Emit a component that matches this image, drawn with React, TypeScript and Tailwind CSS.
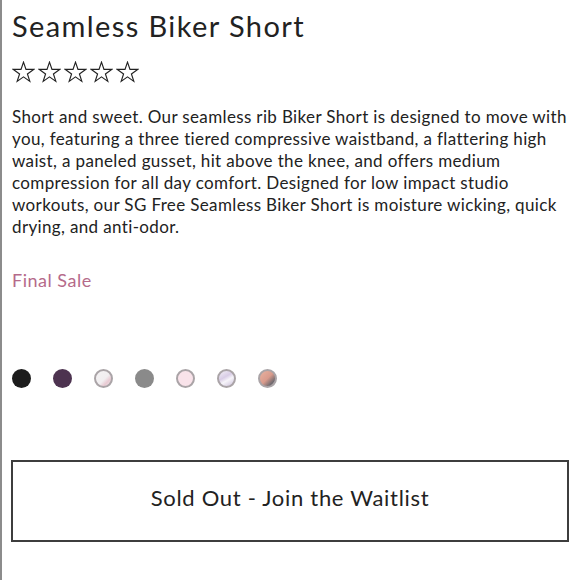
import React from 'react';

const swatches = [
  { bg: 'bg-[#1c1c1c]', ring: '' },
  { bg: 'bg-[#4d3350]', ring: '' },
  { bg: 'bg-[linear-gradient(135deg,#f4f2f3_0%,#f1eef0_55%,#e8c9d2_75%,#f4f2f3_100%)]', ring: 'border-2 border-[#aaa4a7]' },
  { bg: 'bg-[#8a8a8a]', ring: '' },
  { bg: 'bg-[#f9e3ea]', ring: 'border-2 border-[#aaa4a7]' },
  { bg: 'bg-[linear-gradient(150deg,#f3f0f6_0%,#d9cde6_40%,#f7f5fa_60%,#cbbfd9_100%)]', ring: 'border-2 border-[#aaa4a7]' },
  { bg: 'bg-[linear-gradient(135deg,#e8b2a0_0%,#d99b8c_50%,#6f6a70_80%,#c9a49c_100%)]', ring: 'border-2 border-[#aaa4a7]' },
];

function Star() {
  return (
    <svg width="23" height="22" viewBox="0 0 24 23" fill="none" stroke="#222" strokeWidth="1.2" strokeLinejoin="miter">
      <path d="M12 1.2l2.6 7.6h8l-6.5 4.8 2.5 7.7L12 16.6l-6.6 4.7 2.5-7.7L1.4 8.8h8z" />
    </svg>
  );
}

export default function App() {
  return (
    <div className="w-[580px] h-[580px] bg-white border-l-2 border-[#8c8c8c] overflow-hidden font-['Lato','Noto_Sans',sans-serif] text-[#222]">
      <div className="pl-[10px] pr-[10px] pt-[6px]">
        <h1 className="text-[29px] leading-[40px] font-normal tracking-[1.4px]">Seamless Biker Short</h1>

        <div className="flex gap-[3px] mt-[15px]">
          <Star />
          <Star />
          <Star />
          <Star />
          <Star />
        </div>

        <p className="mt-[23px] text-[17px] leading-[22px] tracking-[0.36px]">
          Short and sweet. Our seamless rib Biker Short is designed to move with you, featuring a three tiered
          compressive waistband, a flattering high waist, a paneled gusset, hit above the knee, and offers medium
          compression for all day comfort. Designed for low impact studio workouts, our SG Free Seamless Biker Short is
          moisture wicking, quick drying, and anti-odor.
        </p>

        <div className="mt-[30px] text-[18px] leading-[24px] tracking-[0.5px] text-[#b56a8a]">Final Sale</div>

        <div className="flex gap-[22px] mt-[77px]">
          {swatches.map((s, i) => (
            <span key={i} className={`block w-[19px] h-[19px] rounded-full ${s.bg} ${s.ring}`} />
          ))}
        </div>

        <button className="mt-[72px] w-[558px] h-[82px] border-2 border-[#3d3d3d] bg-white text-[22px] tracking-[0.7px] text-[#222] flex items-center justify-center pb-[8px] -ml-[1px]">
          Sold Out - Join the Waitlist
        </button>
      </div>
    </div>
  );
}
